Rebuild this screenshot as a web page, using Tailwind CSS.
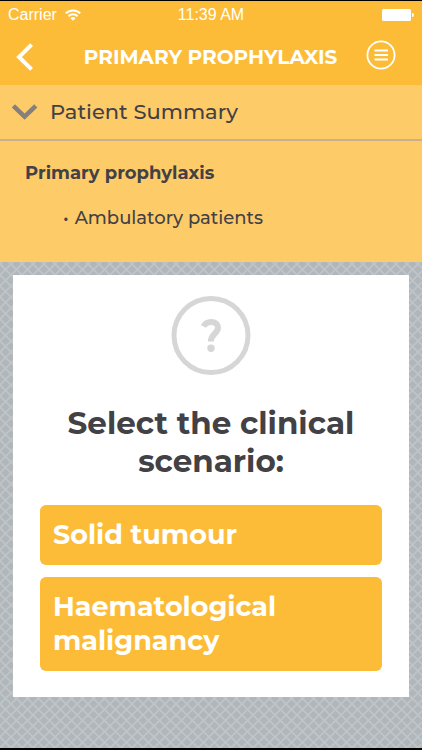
<!DOCTYPE html>
<html lang="en">
<head>
<meta charset="utf-8">
<meta name="viewport" content="width=device-width, initial-scale=1">
<title>Primary Prophylaxis</title>
<script src="https://cdn.jsdelivr.net/npm/@tailwindcss/browser@4"></script>
</head>
<body class="flex min-h-screen flex-col border-t border-b-2 border-black bg-[#b0b6ba] bg-[linear-gradient(45deg,transparent_44%,#bec4c7_46%_54%,transparent_56%),linear-gradient(-45deg,transparent_44%,#bec4c7_46%_54%,transparent_56%)] bg-size-[11px_11px] font-['Montserrat','Inter','Liberation_Sans',sans-serif] text-[#424146]">
  <header class="bg-[#fdbc38] text-white">
    <div class="grid h-7 grid-cols-3 items-center px-2 font-['Liberation_Sans',sans-serif] text-[16px]">
      <div class="flex items-center gap-2">
        <span>Carrier</span>
        <svg class="h-3 w-4" viewBox="0 0 16 12" fill="none" stroke="currentColor" stroke-width="2" aria-hidden="true">
          <path d="M.8 4.400a10.200 10.200 0 0 1 14.400 0M3.400 7.200a6.500 6.500 0 0 1 9.200 0"/>
          <path d="M8 11.800 5.400 9.200a3.700 3.700 0 0 1 5.200 0z" fill="currentColor" stroke="none"/>
        </svg>
      </div>
      <span class="text-center">11:39 AM</span>
      <svg class="h-3 w-8 justify-self-end" viewBox="0 0 32 12" fill="currentColor" aria-hidden="true">
        <rect width="29" height="12" rx="1.500"/><path d="M30 4a2 2 0 0 1 0 4z"/>
      </svg>
    </div>
    <div class="flex h-14 items-center justify-between pr-[25px] pl-4">
      <button class="flex h-10 w-8 items-center" aria-label="Back">
        <svg class="h-7 w-[18px]" viewBox="0 0 18 28" fill="none" stroke="currentColor" stroke-width="4" aria-hidden="true"><path d="M15.600 1.600 3 14l12.600 12.400"/></svg>
      </button>
      <h1 class="pl-2 text-[20px] font-bold whitespace-nowrap">PRIMARY PROPHYLAXIS</h1>
      <button class="flex h-9 w-8 items-start" aria-label="Menu">
        <svg class="h-8 w-8" viewBox="0 0 32 32" fill="none" stroke="currentColor" stroke-width="1.800" aria-hidden="true"><circle cx="16" cy="16" r="13.600"/><path d="M9.500 11.500h13.500M9.500 16h13.500M9.500 20.500h13.500"/></svg>
      </button>
    </div>
  </header>
  <section class="bg-[#fecb69]">
    <button class="flex w-full items-center gap-3 border-b-2 border-[#c9b08a] px-3 pt-[11px] pb-[11px] text-left text-[21px] leading-8 font-medium">
      <svg class="h-4 w-[26px]" viewBox="0 0 26 16" fill="none" stroke="#85807b" stroke-width="4.600" aria-hidden="true"><path d="M1.400 1.800 12.600 12.600 23.800 1.800"/></svg>
      <span>Patient Summary</span>
    </button>
    <div class="px-[25px] pt-5 pb-8 leading-6">
      <h2 class="text-[18px] font-bold">Primary prophylaxis</h2>
      <ul class="pt-[21px] pl-[38px] text-[18px] font-medium">
        <li class="flex gap-[6px]"><span>•</span><span>Ambulatory patients</span></li>
      </ul>
    </div>
  </section>
  <main class="m-[13px] bg-white px-[27px] pt-5 pb-[26px]">
    <svg class="mx-auto h-20 w-20" viewBox="0 0 80 80" fill="none" stroke="#d6d6d6" aria-hidden="true">
      <circle cx="40" cy="40.500" r="37" stroke-width="5"/>
      <path d="M32.500 31.500C34 28.500 36.500 27 40.200 27c4.300 0 6.800 2.300 6.800 5.700 0 5.600-7.200 6.400-7.200 13.800" stroke-width="6"/>
      <circle cx="40" cy="53.300" r="3.700" fill="#d6d6d6" stroke="none"/>
    </svg>
    <h2 class="pt-[29px] pb-[25px] text-center text-[31px] leading-[38px] font-bold">Select the clinical scenario:</h2>
    <div class="flex flex-col gap-3">
      <button class="rounded-md bg-[#fdbc38] px-[13px] py-[13px] text-left text-[27px] leading-[34px] font-bold text-white">Solid tumour</button>
      <button class="rounded-md bg-[#fdbc38] px-[13px] py-[13px] text-left text-[27px] leading-[34px] font-bold text-white">Haematological malignancy</button>
    </div>
  </main>
</body>
</html>
